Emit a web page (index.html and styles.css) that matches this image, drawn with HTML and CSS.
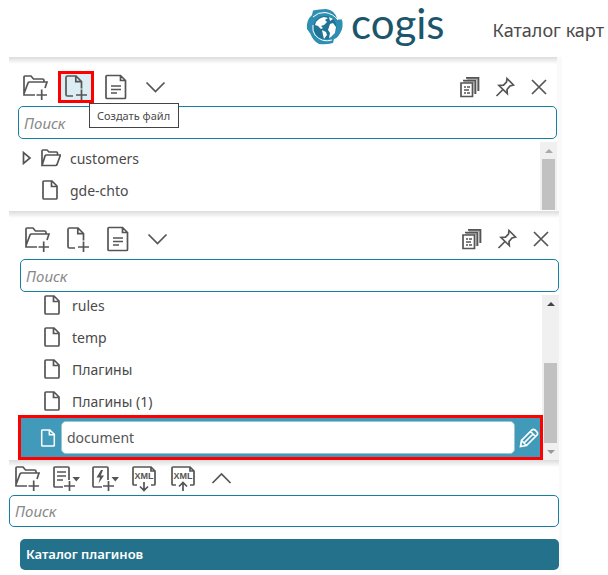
FILE: index.html
```
<!DOCTYPE html>
<html lang="ru">
<head>
	<meta charset="UTF-8">
	<meta name="viewport" content="width=device-width, initial-scale=1">
	<title>Каталог карт</title>
	<link rel="stylesheet" href="styles.css">
</head>
<body>
	<svg class="sprite" aria-hidden="true">
		<symbol id="folder-add" viewBox="0 0 26 26">
			<path d="M2 19V3q0-1 1-1h6l2.500 3h9q1.500 0 1.500 1.500V8M2 19.500L6 9q.500-1 1.500-1H25l-2 6M2 19v2h11M14.500 21h10.500M19.700 15.500v10.500"/>
		</symbol>
		<symbol id="file-add" viewBox="0 0 26 26">
			<path d="M10 22H4.500Q3 22 3 20.500V3.500Q3 2 4.500 2H13l5.500 5.500v7M12.800 2v5.700h5.700M13 21h11M18.500 15.500v11"/>
		</symbol>
		<symbol id="doc" viewBox="0 0 26 26">
			<path d="M4 1.500h13.500l5 5v17q0 1-1 1H4q-1 0-1-1v-21q0-1 1-1zM17.500 1.500v5h5M8 12h10M8 15.500h10M8 19h6"/>
		</symbol>
		<symbol id="down" viewBox="0 0 26 26">
			<path d="M3.500 8.500l9 9 9-9"/>
		</symbol>
		<symbol id="up" viewBox="0 0 26 26">
			<path d="M3.500 18l9-9 9 9"/>
		</symbol>
		<symbol id="stack" viewBox="0 0 24 24">
			<path class="thin" d="M5.500 6.800h11V19M9 4h11V16"/>
			<path d="M3 8h11.500v13.500H3zM5 5.500h12.500V19M8 2.800h12.500V16"/>
			<path class="line" d="M6 12h2M9 12h3M6 15h5M6 18h2M9 18h3"/>
		</symbol>
		<symbol id="pin" viewBox="0 0 24 24">
			<path d="M14 3.500l6.500 6.500-3.500 1-3 3.500.300 4L6 10.500l4.500-.300L13.500 7zM10 14.500L3.500 21"/>
		</symbol>
		<symbol id="close" viewBox="0 0 24 24">
			<path d="M5 5l14 14M19 5L5 19"/>
		</symbol>
		<symbol id="file" viewBox="0 0 20 20">
			<path d="M4 1h8l5 5v12q0 1-1 1H4q-1 0-1-1V2q0-1 1-1zM11.500 1v5.500H17"/>
		</symbol>
		<symbol id="folder" viewBox="0 0 20 20">
			<path d="M1 17V3q0-1 1-1h4l2 2h7.500q1 0 1 1v2M1 17.500L4 8q.500-1 1.500-1h14L16 16.500q-.500 1-1.500 1z"/>
		</symbol>
		<symbol id="list-add" viewBox="0 0 28 26">
			<path d="M11 22H3q-1 0-1-1V3q0-1 1-1h13q1 0 1 1v12M5 7h9M5 11h9M5 15h6M12 21h11M17.500 16v10"/>
			<path class="solid" d="M20.500 12H28l-3.700 4.500z"/>
		</symbol>
		<symbol id="flash-add" viewBox="0 0 28 26">
			<path d="M11 22H3q-1 0-1-1V3q0-1 1-1h13q1 0 1 1v12M12 21h11M17.500 16v10"/>
			<path class="solid" d="M20.500 12H28l-3.700 4.500zM10 5L5.500 12.500h3.500L7.500 18.500 13 10.500H9.800L12 5z"/>
		</symbol>
		<symbol id="pencil" viewBox="0 0 20 20">
			<path d="M1.500 18.500l1-6L13 2q1.500-1.200 3 0l2 2q1.200 1.500 0 3L7.500 17.500zM2.500 12.500l5 5M11.500 3.500l5 5M5 15L14 6"/>
		</symbol>
	</svg>

	<header class="header">
		<div class="logo">
			<svg class="globe" viewBox="0 0 36 36" aria-hidden="true">
				<path class="rim" d="M5 6L6 1.500Q12 0 19 0q9 1 11.500 10.500H35q2 8-2 14-3 5-6 5.500l-1 4q-7 2-14 1-6-3-8.500-10L0 20Q-1 11 5 6z"/>
				<circle class="water" cx="18" cy="18.500" r="11.500"/>
				<path class="land" d="M9 13q3-4 8-5l4 1-3 2 2 2-3 3-3 1 2 2-2 1-3-3-3-1zM15 21l4 2 1 3-3 4-1-4zM23 15l3-1 3 4-1 6-4 4-2 1 1-5-2-3zM22 8l4 2-3 2z"/>
				<path class="cut" d="M6 8q5-5 12-4.500 8 1 13 7.500M25 31q-10 3-17-5Q5 22 6 16"/>
			</svg>
			<span class="logo-name">cogis</span>
		</div>
		<div class="title">Каталог карт</div>
	</header>

	<main class="workspace">
		<section class="panel panel-first">
			<div class="toolbar">
				<button type="button" class="tool" aria-label="Создать папку"><svg class="icon"><use href="#folder-add"/></svg></button>
				<button type="button" class="tool marked" aria-label="Создать файл">
					<svg class="icon"><use href="#file-add"/></svg>
					<span class="tooltip">Создать файл</span>
				</button>
				<button type="button" class="tool" aria-label="Документ"><svg class="icon"><use href="#doc"/></svg></button>
				<button type="button" class="tool" aria-label="Развернуть"><svg class="icon"><use href="#down"/></svg></button>
				<div class="window-tools">
					<button type="button" class="tool small" aria-label="Копии"><svg class="icon"><use href="#stack"/></svg></button>
					<button type="button" class="tool small" aria-label="Закрепить"><svg class="icon"><use href="#pin"/></svg></button>
					<button type="button" class="tool small" aria-label="Закрыть"><svg class="icon"><use href="#close"/></svg></button>
				</div>
			</div>
			<input type="text" class="search" placeholder="Поиск" aria-label="Поиск">
			<div class="list-wrap">
				<ul class="list">
					<li class="row branch"><svg class="arrow" viewBox="0 0 10 14"><path d="M1.500 1.500v11L8 7z"/></svg><svg class="item-icon"><use href="#folder"/></svg>customers</li>
					<li class="row"><svg class="item-icon"><use href="#file"/></svg>gde-chto</li>
				</ul>
				<div class="scroll">
					<span class="scroll-up light"></span>
					<span class="thumb"></span>
				</div>
			</div>
		</section>

		<section class="panel panel-second">
			<div class="toolbar">
				<button type="button" class="tool" aria-label="Создать папку"><svg class="icon"><use href="#folder-add"/></svg></button>
				<button type="button" class="tool" aria-label="Создать файл"><svg class="icon"><use href="#file-add"/></svg></button>
				<button type="button" class="tool" aria-label="Документ"><svg class="icon"><use href="#doc"/></svg></button>
				<button type="button" class="tool" aria-label="Развернуть"><svg class="icon"><use href="#down"/></svg></button>
				<div class="window-tools">
					<button type="button" class="tool small" aria-label="Копии"><svg class="icon"><use href="#stack"/></svg></button>
					<button type="button" class="tool small" aria-label="Закрепить"><svg class="icon"><use href="#pin"/></svg></button>
					<button type="button" class="tool small" aria-label="Закрыть"><svg class="icon"><use href="#close"/></svg></button>
				</div>
			</div>
			<input type="text" class="search" placeholder="Поиск" aria-label="Поиск">
			<div class="list-wrap">
				<ul class="list">
					<li class="row"><svg class="item-icon"><use href="#file"/></svg>rules</li>
					<li class="row"><svg class="item-icon"><use href="#file"/></svg>temp</li>
					<li class="row"><svg class="item-icon"><use href="#file"/></svg>Плагины</li>
					<li class="row"><svg class="item-icon"><use href="#file"/></svg>Плагины (1)</li>
					<li class="row editing">
						<svg class="item-icon"><use href="#file"/></svg>
						<input type="text" class="name" value="document" aria-label="Имя файла">
						<button type="button" class="edit" aria-label="Переименовать"><svg class="item-icon"><use href="#pencil"/></svg></button>
					</li>
				</ul>
				<div class="scroll">
					<span class="scroll-up"></span>
					<span class="thumb"></span>
					<span class="scroll-down"></span>
				</div>
			</div>
		</section>

		<section class="panel panel-third">
			<div class="toolbar">
				<button type="button" class="tool" aria-label="Создать папку"><svg class="icon"><use href="#folder-add"/></svg></button>
				<button type="button" class="tool" aria-label="Добавить"><svg class="icon wide"><use href="#list-add"/></svg></button>
				<button type="button" class="tool" aria-label="Добавить действие"><svg class="icon wide"><use href="#flash-add"/></svg></button>
				<button type="button" class="tool" aria-label="Скачать XML">
					<svg class="icon" viewBox="0 0 26 26"><path d="M6 20H3q-1 0-1-1V3q0-1 1-1h17l4 4v13q0 1-1 1h-3M20 2v4h4M13 17v8M9 21.500l4 4 4-4"/><text x="13" y="14">XML</text></svg>
				</button>
				<button type="button" class="tool" aria-label="Загрузить XML">
					<svg class="icon" viewBox="0 0 26 26"><path d="M6 20H3q-1 0-1-1V3q0-1 1-1h17l4 4v13q0 1-1 1h-3M20 2v4h4M13 18v8M9 21.500l4-4 4 4"/><text x="13" y="14">XML</text></svg>
				</button>
				<button type="button" class="tool" aria-label="Свернуть"><svg class="icon"><use href="#up"/></svg></button>
			</div>
			<input type="text" class="search" placeholder="Поиск" aria-label="Поиск">
			<h2 class="group">Каталог плагинов</h2>
		</section>
	</main>
</body>
</html>
```
FILE: styles.css
```
*{
	box-sizing: border-box;
}
body{
	margin: 0;
	background: #fff;
	color: #4a4a4a;
	font-family: "Noto Sans", "Open Sans", sans-serif;
	font-size: 14px;
}
button{
	padding: 0;
	border: 0;
	background: none;
	font: inherit;
	color: inherit;
}
svg{
	flex: none;
	overflow: visible;
	fill: none;
	stroke: #555;
	stroke-width: 1.7;
}
.sprite{
	position: absolute;
	width: 0;
	height: 0;
}
.solid{
	fill: #555;
	stroke: none;
}
.thin{
	stroke: #aaa;
}
.line{
	stroke-width: 1.3;
}
.header{
	display: flex;
	justify-content: flex-end;
	gap: 48px;
	height: 57px;
	padding-right: 4px;
}
.logo{
	display: flex;
	gap: 8px;
}
.globe{
	width: 36px;
	height: 36px;
	margin-top: 9px;
	stroke: none;
}
.rim{
	fill: #2f8fb3;
}
.water{
	fill: #1f7394;
}
.land{
	fill: #fff;
}
.cut{
	stroke: #fff;
	stroke-width: 1;
}
.logo-name{
	color: #1b566c;
	font-family: Lato, sans-serif;
	font-size: 42px;
	line-height: 46px;
}
.title{
	padding-top: 18px;
	font-size: 18px;
	line-height: 25px;
}
.workspace{
	margin: 0 46px 0 9px;
}
.panel{
	background: linear-gradient(#dcdcdc, #fff 7px);
	border-style: solid;
	border-image: linear-gradient(to right, #d8d8d8, #fafafa) 1;
	border-width: 0 3px 0 0;
}
.panel-first{
	height: 154px;
	padding: 14px 0 0 9px;
	border-right-width: 5px;
}
.panel-second{
	padding: 12px 0 0 11px;
}
.panel-third{
	height: 114px;
	padding-top: 2px;
}
.toolbar{
	display: flex;
	gap: 4px;
	margin-bottom: 3px;
}
.panel-second .toolbar{
	margin-bottom: 4px;
}
.panel-third .toolbar{
	gap: 3px;
	margin-bottom: 1px;
}
.tool{
	display: flex;
	align-items: center;
	justify-content: center;
	width: 36px;
	height: 32px;
}
.panel-first .tool:first-child,
.panel-second .tool:first-child{
	justify-content: flex-start;
	padding-left: 4px;
}
.small{
	width: 30px;
}
.window-tools .tool:first-child{
	padding-left: 2px;
}
.icon{
	width: 26px;
	height: 26px;
}
.small .icon{
	width: 24px;
	height: 24px;
}
.wide{
	width: 28px;
}
.icon text{
	fill: #555;
	stroke: none;
	font-family: "Liberation Sans Narrow", "Liberation Sans", sans-serif;
	font-size: 9px;
	font-weight: bold;
	text-anchor: middle;
}
.marked{
	position: relative;
	border: 3px solid #f00;
	background: #dcedf3;
}
.tooltip{
	position: absolute;
	top: 29px;
	left: 28px;
	z-index: 1;
	padding: 0 8px 0 7px;
	border: 1px solid #444;
	background: #fff;
	font-size: 11px;
	line-height: 23px;
	white-space: nowrap;
}
.window-tools{
	display: flex;
	gap: 4px;
	margin-left: auto;
	margin-right: 3px;
}
.search{
	display: block;
	width: 100%;
	height: 33px;
	padding: 0 5px;
	border: 1px solid #1580a4;
	border-radius: 5px;
	background: #fff;
	font: italic 15px "Noto Sans", "Open Sans", sans-serif;
}
.search::placeholder{
	color: #888;
}
.list-wrap{
	display: flex;
	padding-top: 3px;
}
.panel-first .list-wrap{
	height: 71px;
}
.list{
	flex: 1;
	display: flex;
	flex-direction: column;
	gap: 12px;
	margin: 0;
	padding: 6px 0 0;
	list-style: none;
}
.panel-second .list{
	padding-top: 0;
}
.row{
	display: flex;
	align-items: center;
	gap: 10px;
	height: 20px;
	padding-left: 22px;
}
.branch{
	gap: 9px;
	padding-left: 4px;
}
.arrow{
	width: 10px;
	height: 14px;
}
.item-icon{
	width: 20px;
	height: 20px;
}
.editing{
	z-index: 1;
	gap: 4px;
	height: 45px;
	margin: -8px -1px 0 -2px;
	padding-left: 18px;
	border: 3px solid #f00;
	background: #429aba;
}
.editing svg{
	stroke: #fff;
}
.editing > .item-icon{
	width: 18px;
	height: 18px;
}
.name{
	flex: 1;
	min-width: 0;
	height: 33px;
	padding: 0 5px;
	border: 1px solid #9cc5d3;
	border-radius: 5px;
	background: #fff;
	color: #555;
	font: inherit;
}
.edit{
	display: flex;
	padding-right: 1px;
}
.scroll{
	display: flex;
	flex-direction: column;
	align-items: center;
	width: 17px;
	background: #f0f0f0;
}
.scroll-up,
.scroll-down{
	margin: 7px 0 6px;
	border: 4px solid transparent;
	border-top-width: 0;
	border-bottom-color: #444;
}
.scroll-up.light{
	border-bottom-color: #aaa;
}
.scroll-down{
	border-width: 4px 4px 0;
	border-top-color: #999;
}
.thumb{
	flex: 1;
	width: 13px;
	background: #c1c1c1;
}
.panel-second .thumb{
	flex: none;
	height: 80px;
	margin-top: auto;
}
.panel-third .search{
	height: 32px;
}
.group{
	margin: 12px 0 0 11px;
	padding-left: 6px;
	border-radius: 5px;
	background: #24718b;
	color: #fff;
	font-size: 13px;
	font-weight: 600;
	line-height: 31px;
}
```
